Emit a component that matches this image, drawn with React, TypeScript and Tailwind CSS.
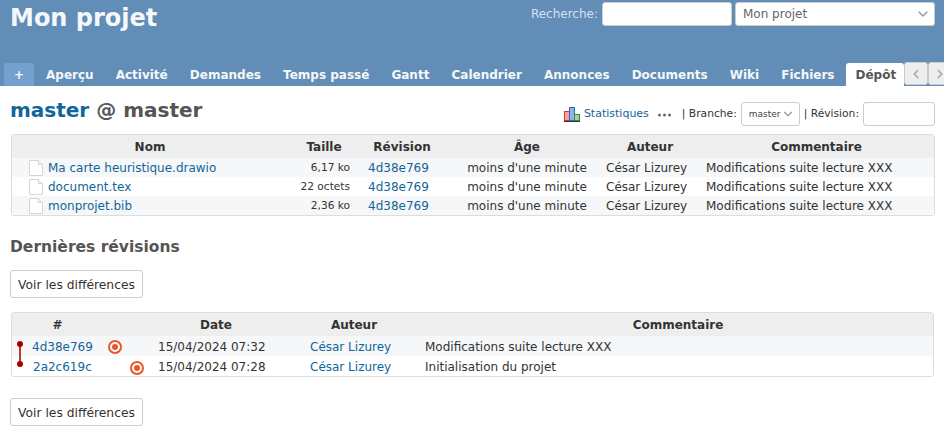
import React from 'react'
import { ChevronDown, ChevronLeft, ChevronRight } from 'lucide-react'

const tabs = ['Aperçu', 'Activité', 'Demandes', 'Temps passé', 'Gantt', 'Calendrier', 'Annonces', 'Documents', 'Wiki', 'Fichiers']

const files = [
  { name: 'Ma carte heuristique.drawio', size: '6,17 ko' },
  { name: 'document.tex', size: '22 octets' },
  { name: 'monprojet.bib', size: '2,36 ko' },
]

const revisions = [
  { id: '4d38e769', date: '15/04/2024 07:32', comment: 'Modifications suite lecture XXX', rowClass: 'bg-[#f6f7f8] pt-[2px]', dotClass: 'ml-[15px]', idClass: 'pl-[20px]' },
  { id: '2a2c619c', date: '15/04/2024 07:28', comment: 'Initialisation du projet', rowClass: 'bg-white pt-[2px]', dotClass: 'ml-[38px] mt-[2px]', idClass: 'pl-[21px]' },
]

const FileIcon = () => (
  <svg width="14" height="16" viewBox="0 0 14 16" className="shrink-0">
    <path d="M0.5 1a.5.5 0 0 1 .5-.5h8.5l4 4V15a.5.5 0 0 1-.5.5H1a.5.5 0 0 1-.5-.5z" fill="#fff" stroke="#d4d4d4" />
    <path d="M9.5 0.5v4h4" fill="#f4f4f4" stroke="#d4d4d4" />
  </svg>
)

const StatsIcon = () => (
  <svg width="16" height="16" viewBox="0 0 16 16" className="shrink-0">
    <rect x="0.5" y="5.5" width="5" height="9" fill="#f9a0a0" stroke="#d33" />
    <rect x="5.5" y="1.5" width="5" height="13" fill="#8cb4ea" stroke="#2f65b5" />
    <rect x="10.5" y="8.5" width="5" height="6" fill="#9ed49e" stroke="#3c8a3c" />
    <path d="M0 15.5h16" stroke="#333" />
  </svg>
)

const RevisionDot = () => (
  <svg width="14" height="14" viewBox="0 0 14 14" className="shrink-0">
    <circle cx="7" cy="7" r="6" fill="#fff" stroke="#e8562a" strokeWidth="2" />
    <circle cx="7" cy="7" r="3" fill="#e8562a" />
  </svg>
)

const MoreDots = () => (
  <svg width="13" height="4" viewBox="0 0 13 4" className="ml-[9px] mt-[2px] shrink-0">
    <circle cx="1.5" cy="2" r="1.5" fill="#666" />
    <circle cx="6.5" cy="2" r="1.5" fill="#666" />
    <circle cx="11.5" cy="2" r="1.5" fill="#666" />
  </svg>
)

const DiffButton = () => (
  <button className="h-[28px] w-[133px] rounded-[3px] border border-[#ccc] bg-white pt-[2px] text-[12.3px] text-[#333]">
    Voir les différences
  </button>
)

export default function App() {
  return (
    <div className="min-h-[438px] overflow-hidden bg-white font-['DejaVu_Sans',sans-serif] text-[12px] text-[#333]">
      {/* Header */}
      <header className="flex h-[86px] flex-col justify-between bg-[#628db6]">
        <div className="flex items-start justify-between pl-[10px] pr-[9px] pt-[2px]">
          <h1 className="text-[24px] leading-[32px] font-bold text-[#f5f8fa]">Mon projet</h1>
          <div className="flex items-center">
            <span className="mr-[4px] text-[#d5e1ec]">Recherche:</span>
            <div className="h-[24px] w-[130px] rounded-[3px] border border-[#ccc] bg-white" />
            <div className="ml-[3px] flex h-[24px] w-[200px] items-center justify-between rounded-[3px] border border-[#ccc] bg-white pl-[7px] pr-[3px] text-[#666]">
              Mon projet
              <ChevronDown size={16} className="text-[#999]" />
            </div>
          </div>
        </div>
        <nav className="flex h-[23px] items-end whitespace-nowrap pl-[4px] text-[12px] font-bold text-[#f5f8fa]">
          <div className="flex h-[23px] w-[30px] shrink-0 items-center justify-center rounded-t-[3px] bg-[#759fcf]">+</div>
          <div className="ml-[12px] flex h-[23px] items-center gap-[22.1px]">
            {tabs.map(tab => (
              <span key={tab}>{tab}</span>
            ))}
          </div>
          <div className="ml-[12px] flex h-[23px] shrink-0 items-center rounded-t-[3px] bg-white pl-[9px] pr-[8px] text-[#555]">Dépôt</div>
          <div className="-mt-[1px] flex shrink-0 self-start">
            <div className="flex h-[23px] w-[24px] shrink-0 items-center justify-center rounded-[3px] border border-[#ccc] bg-[#eee]">
              <ChevronLeft size={14} strokeWidth={3} className="text-[#aaa]" />
            </div>
            <div className="flex h-[23px] w-[24px] shrink-0 items-center justify-center rounded-[3px] border border-[#ccc] bg-[#eee]">
              <ChevronRight size={14} strokeWidth={3} className="text-[#aaa]" />
            </div>
          </div>
        </nav>
      </header>

      {/* Repository title and toolbar */}
      <main className="pl-[10px] pr-[9px]">
        <div className="flex h-[48px] items-start justify-between pt-[10px]">
          <h2 className="text-[20px] leading-[28px] font-bold text-[#555]">
            <span className="text-[#169]">master</span> @ master
          </h2>
          <div className="flex items-center pt-[6px] text-[10.7px]">
            <StatsIcon />
            <span className="ml-[4px] text-[11px] text-[#169]">Statistiques</span>
            <MoreDots />
            <span className="ml-[11px]">| Branche:</span>
            <div className="ml-[4px] flex h-[24px] w-[59px] items-center justify-between rounded-[3px] border border-[#ccc] pl-[7px] pr-[4px] text-[9px] text-[#444]">
              <span className="pt-[2px]">master</span>
              <ChevronDown size={14} className="text-[#999]" />
            </div>
            <span className="ml-[4px]">| Révision:</span>
            <div className="ml-[4px] h-[24px] w-[72px] rounded-[3px] border border-[#ccc]" />
          </div>
        </div>

        {/* File list */}
        <table className="ml-[1px] block w-[924px] rounded-[3px] border border-[#ddd]">
          <tbody className="block">
            <tr className="grid h-[23px] grid-cols-[276px_72px_84px_166px_90px_1fr] items-center bg-[#eee] font-bold">
              <th className="text-center">Nom</th>
              <th className="text-center">Taille</th>
              <th className="text-center">Révision</th>
              <th className="text-center">Âge</th>
              <th className="pr-[10px] text-center">Auteur</th>
              <th className="pr-[1px] text-center">Commentaire</th>
            </tr>
            {files.map((file, i) => (
              <tr key={file.name} className={`grid h-[19px] grid-cols-[276px_72px_84px_166px_90px_1fr] items-center ${i % 2 === 0 ? 'bg-[#f6f7f8]' : 'bg-white'}`}>
                <td className="flex items-center gap-[5px] pl-[17px] text-[#169]">
                  <FileIcon />
                  {file.name}
                </td>
                <td className="pr-[10px] text-right text-[10.6px]">{file.size}</td>
                <td className="pl-[8px] text-[#169]">4d38e769</td>
                <td className="text-center">moins d'une minute</td>
                <td className="-ml-[4px] whitespace-nowrap">César Lizurey</td>
                <td className="pl-[6px]">Modifications suite lecture XXX</td>
              </tr>
            ))}
          </tbody>
        </table>

        <h3 className="mt-[20px] text-[15.5px] leading-[22px] font-bold text-[#555]">Dernières révisions</h3>
        <div className="mt-[12px]">
          <DiffButton />
        </div>

        {/* Revision list */}
        <table className="ml-[1px] mt-[14px] block w-[923px] rounded-[3px] border border-[#ddd]">
          <tbody className="block">
            <tr className="grid h-[23px] grid-cols-[135px_150px_120px_1fr] items-center bg-[#eee] font-bold">
              <th className="pr-[44px] text-center">#</th>
              <th className="pr-[12px] text-center">Date</th>
              <th className="pr-[6px] text-center">Auteur</th>
              <th className="pl-[6px] text-center">Commentaire</th>
            </tr>
            {revisions.map((rev, i) => (
              <tr key={rev.id} className={`relative grid h-[20px] grid-cols-[135px_150px_120px_1fr] items-center ${rev.rowClass}`}>
                <td className={`flex items-center text-[#169] ${rev.idClass}`}>
                  {rev.id}
                  <span className={rev.dotClass}>
                    <RevisionDot />
                  </span>
                </td>
                <td className="pl-[11px]">{rev.date}</td>
                <td className="pl-[13px] text-[#169]">César Lizurey</td>
                <td className="pl-[8px]">{rev.comment}</td>
                {i === 0 && (
                  <td className="absolute left-[4px] top-[4px] z-10">
                    <svg width="8" height="28" viewBox="0 0 8 28" className="block overflow-visible">
                      <path d="M4 4v20" stroke="#c0392b" strokeWidth="2" />
                      <circle cx="4" cy="4" r="3" fill="#a80000" />
                      <circle cx="4" cy="24" r="3" fill="#a80000" />
                    </svg>
                  </td>
                )}
              </tr>
            ))}
          </tbody>
        </table>
        <div className="mt-[21px]">
          <DiffButton />
        </div>
      </main>
    </div>
  )
}
